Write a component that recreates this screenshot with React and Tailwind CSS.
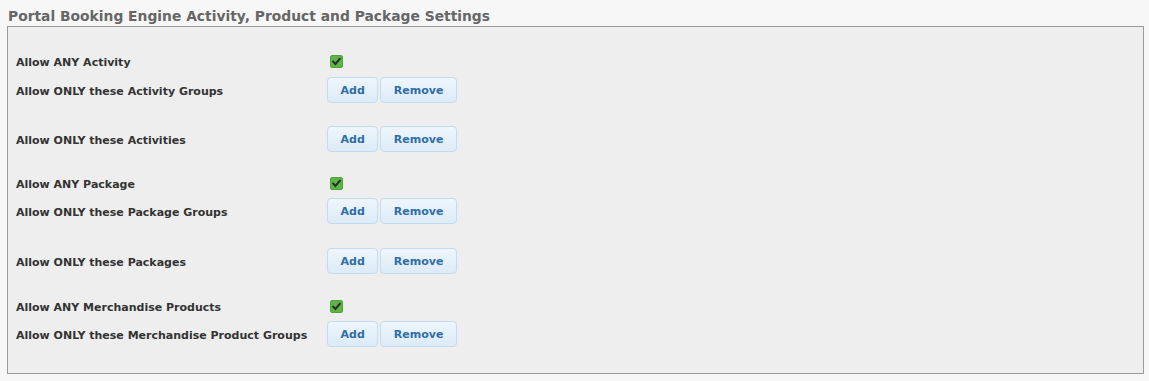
import React from "react";

const font = { fontFamily: '"DejaVu Sans", Verdana, sans-serif' };

function Check() {
  return (
    <div className="ml-[3px] w-[13px] h-[13px] rounded-[2px] bg-[#5db546] border border-[#4fa63a] flex items-center justify-center">
      <svg width="11" height="11" viewBox="0 0 11 11">
        <path d="M2.2 5.6 L4.4 7.9 L8.8 2.8" fill="none" stroke="#2b2b2b" strokeWidth="2" strokeLinecap="square" />
      </svg>
    </div>
  );
}

function Btn({ children }) {
  return (
    <button className="h-[26px] px-[12.5px] rounded-[4px] border border-[#c3dbef] bg-gradient-to-b from-[#eef6fd] to-[#dcebf8] text-[11px] font-bold text-[#2f6ea6] leading-none">
      {children}
    </button>
  );
}

function CheckRow({ label, mt }) {
  return (
    <div className={`flex items-center h-[13px] ${mt}`}>
      <div className="w-[311px] pt-[2px] text-[11px] font-bold text-[#333] leading-none">{label}</div>
      <Check />
    </div>
  );
}

function BtnRow({ label, mt }) {
  return (
    <div className={`flex items-center h-[26px] ${mt}`}>
      <div className="w-[311px] pt-[2px] text-[11px] font-bold text-[#333] leading-none">{label}</div>
      <div className="flex gap-[2px]">
        <Btn>Add</Btn>
        <Btn>Remove</Btn>
      </div>
    </div>
  );
}

export default function App() {
  return (
    <div className="w-[1149px] h-[381px] bg-[#f7f7f7] pl-[7px] pr-[5px] pt-[6px]" style={font}>
      <div className="text-[13.85px] font-bold text-[#666] leading-[20px] pl-[1px]">
        Portal Booking Engine Activity, Product and Package Settings
      </div>
      <div className="h-[348px] border border-[#9a9a9a] bg-[#eeeeee] pl-[8px] pt-[28px]">
        <CheckRow label="Allow ANY Activity" mt="mt-0" />
        <BtnRow label="Allow ONLY these Activity Groups" mt="mt-[9px]" />
        <BtnRow label="Allow ONLY these Activities" mt="mt-[23px]" />
        <CheckRow label="Allow ANY Package" mt="mt-[25px]" />
        <BtnRow label="Allow ONLY these Package Groups" mt="mt-[8px]" />
        <BtnRow label="Allow ONLY these Packages" mt="mt-[24px]" />
        <CheckRow label="Allow ANY Merchandise Products" mt="mt-[26px]" />
        <BtnRow label="Allow ONLY these Merchandise Product Groups" mt="mt-[8px]" />
      </div>
    </div>
  );
}
